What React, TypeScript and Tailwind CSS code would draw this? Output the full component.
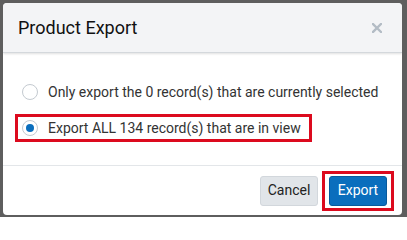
import React from 'react'

const Radio = ({ checked }: { checked?: boolean }) => (
  <span className="w-4 h-4 rounded-full border border-[#c4cad0] bg-white flex items-center justify-center shrink-0">
    {checked && <span className="w-[8px] h-[8px] rounded-full bg-[#0a6ebd]" />}
  </span>
)

const App = () => {
  return (
    <div className="w-[407px] h-[217px] bg-[#5e5e5e] p-[3px] pr-[5px] pb-[2px] font-['Roboto',sans-serif]">
      <div className="w-full h-full bg-white rounded-[4px] flex flex-col overflow-hidden">
        {/* Header */}
        <div className="h-[50px] shrink-0 bg-[#f3f4f6] border-b border-[#d4d8dc] shadow-[0_1px_2px_rgba(0,0,0,0.12)] flex items-center justify-between pl-[15px] pr-[20px]">
          <h2 className="text-[18px] text-[#111] leading-none">Product Export</h2>
          <svg width="10" height="10" viewBox="0 0 10 10" className="mt-[1px]">
            <path d="M1 1 L9 9 M9 1 L1 9" stroke="#b3bcc5" strokeWidth="2.4" strokeLinecap="square" />
          </svg>
        </div>

        {/* Body */}
        <div className="flex-1 flex flex-col gap-2 pt-[25px] pl-[12px] text-[14px] text-[#333]">
          <label className="h-[28px] w-fit flex items-center gap-[10px] border-[3px] border-transparent pl-[4px] pr-[8px]">
            <Radio />
            <span>Only export the 0 record(s) that are currently selected</span>
          </label>
          <label className="h-[28px] w-fit flex items-center gap-[10px] border-[3px] border-[#dc0a1e] pl-[4px] pr-[8px]">
            <Radio checked />
            <span>Export ALL 134 record(s) that are in view</span>
          </label>
        </div>

        {/* Footer */}
        <div className="h-[50px] shrink-0 border-t border-[#e3e6e9] flex items-center justify-end gap-[4px] pr-[8px]">
          <button className="h-[30px] w-[58px] rounded-[3px] bg-[#e1e5e9] border border-[#d2d7dc] text-[14px] text-[#222]">
            Cancel
          </button>
          <div className="border-[3px] border-[#dc0a1e] px-[4px] py-[2px]">
            <button className="h-[30px] w-[58px] rounded-[3px] bg-[#0a6ebd] border border-[#075a9c] text-[14px] text-white block">
              Export
            </button>
          </div>
        </div>
      </div>
    </div>
  )
}

export default App
